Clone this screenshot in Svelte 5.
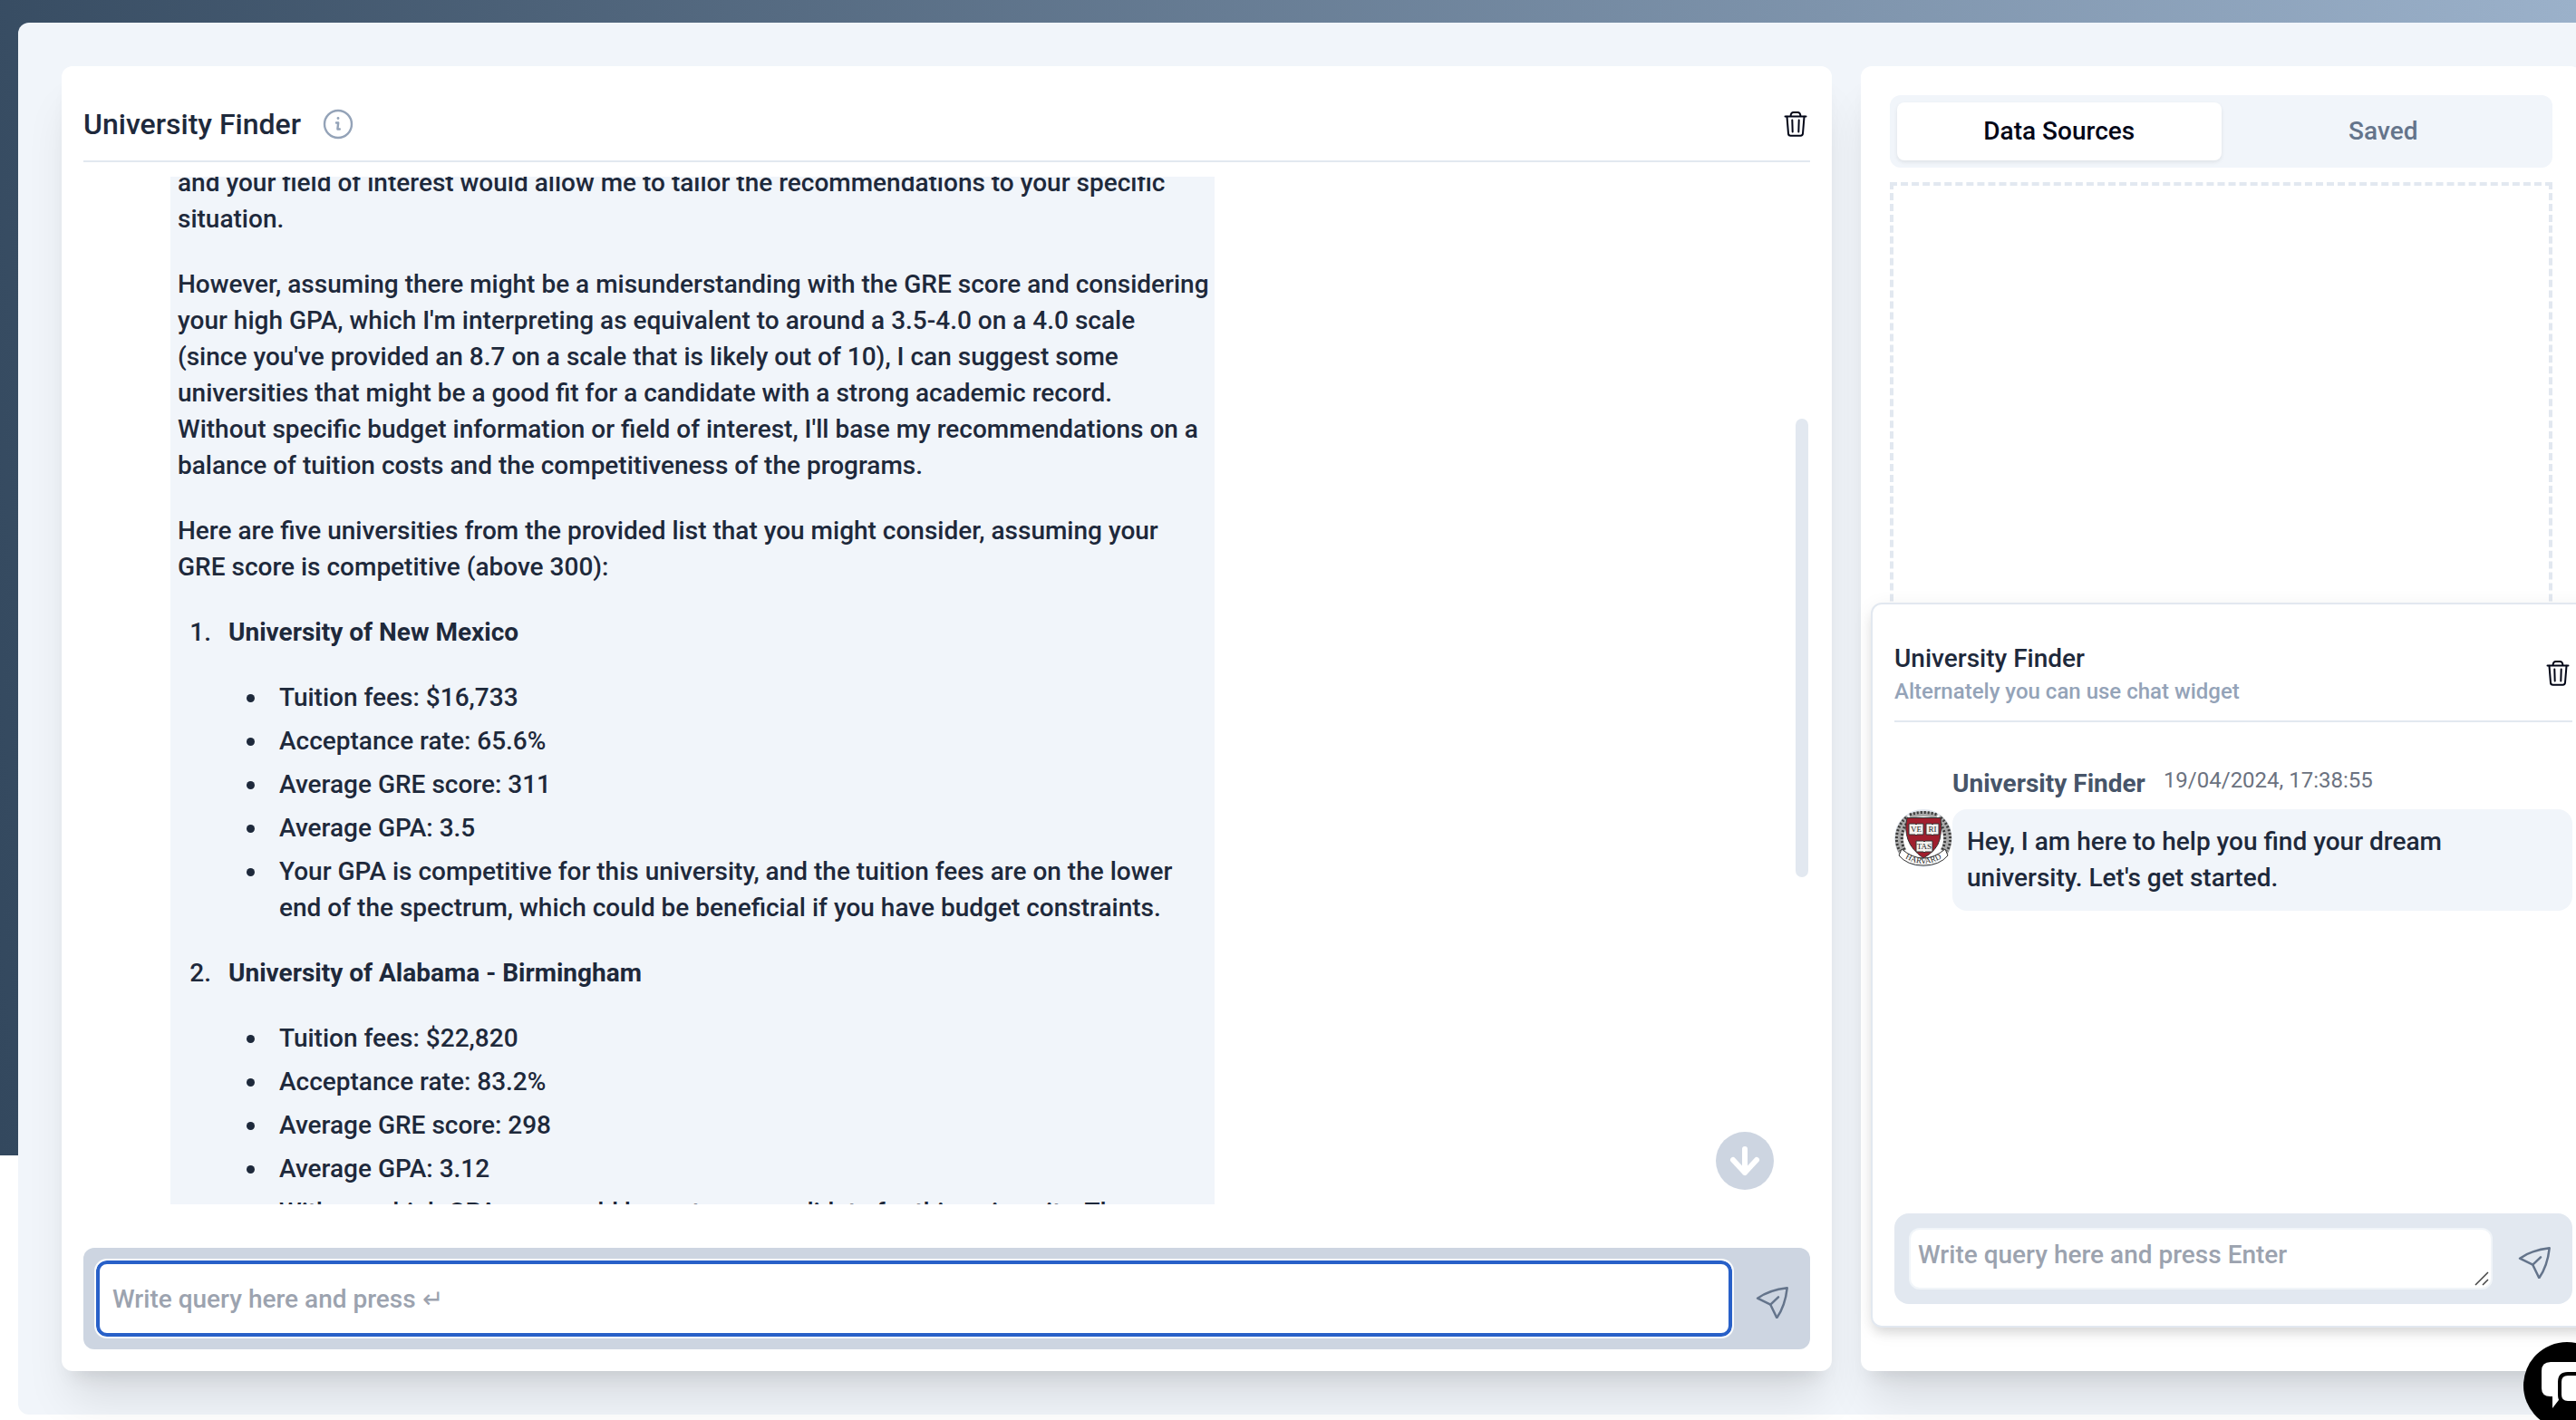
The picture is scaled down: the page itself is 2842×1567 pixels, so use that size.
<script lang="ts">
	type University = {
		name: string;
		facts: string[];
	};

	const intro = [
		'and your field of interest would allow me to tailor the recommendations to your specific situation.',
		"However, assuming there might be a misunderstanding with the GRE score and considering your high GPA, which I'm interpreting as equivalent to around a 3.5-4.0 on a 4.0 scale (since you've provided an 8.7 on a scale that is likely out of 10), I can suggest some universities that might be a good fit for a candidate with a strong academic record.\nWithout specific budget information or field of interest, I'll base my recommendations on a balance of tuition costs and the competitiveness of the programs.",
		'Here are five universities from the provided list that you might consider, assuming your GRE score is competitive (above 300):'
	];

	const universities: University[] = [
		{
			name: 'University of New Mexico',
			facts: [
				'Tuition fees: $16,733',
				'Acceptance rate: 65.6%',
				'Average GRE score: 311',
				'Average GPA: 3.5',
				'Your GPA is competitive for this university, and the tuition fees are on the lower end of the spectrum, which could be beneficial if you have budget constraints.'
			]
		},
		{
			name: 'University of Alabama - Birmingham',
			facts: [
				'Tuition fees: $22,820',
				'Acceptance rate: 83.2%',
				'Average GRE score: 298',
				'Average GPA: 3.12',
				'With your high GPA, you could be a strong candidate for this university. The'
			]
		}
	];

	const tabs = ['Data Sources', 'Saved'];
	let activeTab = $state('Data Sources');
	let query = $state('');
	let widgetQuery = $state('');
</script>

{#snippet trashIcon()}
	<svg class="trash" viewBox="0 0 32 32" aria-hidden="true">
		<path d="M4.5 7.5h23M10.5 7.2c.2-2.7 1.3-4.2 3.3-4.2h4.4c2 0 3.1 1.5 3.3 4.2" />
		<path d="M6.5 7.8 8 26.3c.1 1.6 1 2.4 2.5 2.4h11c1.5 0 2.4-.8 2.5-2.4l1.5-18.5" />
		<path d="m12.3 11.5.4 13M19.7 11.5l-.4 13" />
	</svg>
{/snippet}

{#snippet sendIcon()}
	<svg class="plane" viewBox="0 0 36 44" aria-hidden="true">
		<path d="M2 21.7Q15 12.5 34.7 10.3 32.5 30 23.3 43.3L16.3 28.7Z" />
		<path d="M16.3 28.7 25 20.3" />
	</svg>
{/snippet}

<div class="page">
	<div class="backdrop"></div>

	<div class="shell">
		<main class="card chat">
			<header class="chat-header">
				<h1>University Finder</h1>
				<button class="icon-btn" aria-label="About this assistant">
					<svg class="info" viewBox="0 0 34 34" aria-hidden="true">
						<circle cx="17" cy="17" r="15" />
						<path d="M15 15.5h2.2l-.8 7h2.4" />
						<circle class="dot" cx="17" cy="10.5" r="1.4" />
					</svg>
				</button>
				<button class="icon-btn push" aria-label="Clear conversation">{@render trashIcon()}</button>
			</header>

			<div class="messages">
				<article class="answer">
					{#each intro as text}
						<p>{text}</p>
					{/each}
					<ol>
						{#each universities as university (university.name)}
							<li>
								<strong>{university.name}</strong>
								<ul>
									{#each university.facts as fact}
										<li>{fact}</li>
									{/each}
								</ul>
							</li>
						{/each}
					</ol>
				</article>
				<div class="scroll-thumb"></div>
				<button class="scroll-down" aria-label="Scroll to latest message">
					<svg viewBox="0 0 64 64" aria-hidden="true">
						<path d="M32 19v26M19 31l13 14 13-14" />
					</svg>
				</button>
			</div>

			<form class="composer" onsubmit={(e) => e.preventDefault()}>
				<input type="text" aria-label="Your query" placeholder="Write query here and press ↵" bind:value={query} />
				<button class="icon-btn" aria-label="Send">{@render sendIcon()}</button>
			</form>
		</main>

		<aside class="card sources">
			<div class="tabs" role="tablist">
				{#each tabs as tab}
					<button
						role="tab"
						class="tab"
						class:active={activeTab === tab}
						aria-selected={activeTab === tab}
						onclick={() => (activeTab = tab)}>{tab}</button
					>
				{/each}
			</div>
			<div class="drop-area"></div>

			<section class="widget">
				<header class="widget-header">
					<div>
						<h2>University Finder</h2>
						<p>Alternately you can use chat widget</p>
					</div>
					<button class="icon-btn push" aria-label="Clear widget chat">{@render trashIcon()}</button>
				</header>

				<div class="widget-message">
					<div class="byline">
						<strong>University Finder</strong>
						<time datetime="2024-04-19T17:38:55">19/04/2024, 17:38:55</time>
					</div>
					<svg class="avatar" viewBox="0 0 64 64" aria-hidden="true">
						<circle cx="32" cy="32" r="31" fill="#fff" stroke="#e2e8f0" stroke-width="2" />
						<!-- laurel wreath -->
						<g stroke="#aaa" stroke-width="9">
							<path d="M16 10C4 20 3 36 9 47" />
							<path d="M48 10c12 10 13 26 7 37" />
							<path d="M17 8q15-6 30 0" stroke-width="6" />
						</g>
						<g stroke="#3a3a3a" stroke-width="3" stroke-dasharray="2 2">
							<path d="M13 9C1 20 0 36 6 46" />
							<path d="M51 9c12 11 13 27 7 37" />
							<path d="M16 13C7 22 6 36 12 46" />
							<path d="M48 13c9 9 10 23 4 33" />
							<path d="M17 6q15-5 30 0" />
						</g>
						<path d="M8 44q24 20 48 0l3 7q-9 11-27 11T5 51Z" fill="#fff" stroke="#333" />
						<path d="M14 9.5h37q2 12-1 24T32 54Q19 45 15 33.5t-1-24Z" fill="#a01f2d" stroke="#333" />
						<g fill="#f5f3ef" stroke="#333">
							<path d="M16 16h7l1 1 1-1h7v12h-7l-1 1-1-1h-7Z" />
							<path d="M35 16h6l1 1 1-1h6v12h-6l-1 1-1-1h-6Z" />
							<path d="M24 35h8l1 1 1-1h8v12h-8l-1 1-1-1h-8Z" />
						</g>
						<text class="motto" x="24" y="25">VE</text>
						<text class="motto" x="42" y="25">RI</text>
						<text class="motto" x="33" y="44">TAS</text>
						<path id="ribbon" d="M6 50q26 20 52 0" />
						<text class="motto"><textPath href="#ribbon" startOffset="50%">HARVARD</textPath></text>
					</svg>
					<p class="bubble">Hey, I am here to help you find your dream university. Let's get started.</p>
				</div>

				<form class="widget-composer" onsubmit={(e) => e.preventDefault()}>
					<div class="field">
						<textarea rows="1" aria-label="Widget query" placeholder="Write query here and press Enter" bind:value={widgetQuery}></textarea>
						<svg class="grip" viewBox="0 0 16 16" aria-hidden="true">
							<path d="M1 15 15 1M9 15l6-6" />
						</svg>
					</div>
					<button class="icon-btn" aria-label="Send from widget">{@render sendIcon()}</button>
				</form>
			</section>
		</aside>
	</div>

	<button class="launcher" aria-label="Open support chat">
		<svg viewBox="0 0 96 96" aria-hidden="true">
			<path d="M30 22h38q10 0 10 10v18q0 10-10 10H42L32 73V60h-2q-10 0-10-9V32q0-10 10-10Z" fill="#fff" />
			<path d="M49 35h30q9 0 9 9v14q0 9-9 9v9l-10-9H49q-9 0-9-9V44q0-9 9-9Z" fill="#fff" stroke="#000" stroke-width="4" />
		</svg>
	</button>
</div>

<style>
	:global(body) {
		margin: 0;
		background: #fff;
	}

	.page {
		position: relative;
		box-sizing: border-box;
		height: 100vh;
		padding: 25px 0 6px 20px;
		overflow: hidden;
		font-family: Roboto, 'Liberation Sans', sans-serif;
		font-size: 28px;
		font-weight: 500;
		line-height: 40px;
		color: #1e293b;
	}

	.page * {
		box-sizing: border-box;
	}

	.backdrop {
		position: absolute;
		inset: 0 0 292px;
		background: linear-gradient(84deg, #33485e, #9bb1ca);
	}

	.shell {
		position: relative;
		display: grid;
		grid-template-columns: minmax(0, 1fr) 795px;
		gap: 32px;
		height: 100%;
		margin-right: -54px;
		padding: 48px;
		border-radius: 12px;
		background: #f1f5fa;
	}

	.card {
		display: flex;
		flex-direction: column;
		min-height: 0;
		border-radius: 12px;
		background: #fff;
		box-shadow:
			0 40px 50px -10px rgba(0, 0, 0, 0.1),
			0 16px 20px -12px rgba(0, 0, 0, 0.1);
	}

	h1,
	h2,
	p {
		margin: 0;
		font-weight: 500;
	}

	button,
	input,
	textarea {
		font: inherit;
	}

	button {
		padding: 0;
		border: none;
		background: none;
		cursor: pointer;
	}

	.icon-btn {
		display: flex;
		flex: none;
	}

	.push {
		margin-left: auto;
	}

	svg {
		display: block;
		fill: none;
	}

	.trash {
		width: 32px;
		height: 32px;
		stroke: #020617;
		stroke-width: 2;
		stroke-linecap: round;
	}

	.plane {
		width: 36px;
		height: 44px;
		stroke: #64748b;
		stroke-width: 2.5;
		stroke-linejoin: round;
		stroke-linecap: round;
	}

	.info {
		width: 34px;
		height: 34px;
		stroke: #94a3b8;
		stroke-width: 2.4;
		stroke-linejoin: round;
		stroke-linecap: round;
	}

	.info .dot {
		fill: #94a3b8;
		stroke: none;
	}

	/* main chat */
	.chat {
		padding: 24px;
	}

	.chat-header {
		display: flex;
		align-items: center;
		gap: 24px;
		padding: 20px 0;
		border-bottom: 2px solid #e2e8f0;
	}

	h1 {
		font-size: 32px;
	}

	.messages {
		position: relative;
		flex: 1;
		min-height: 0;
		margin: 16px 0 48px;
		padding-left: 96px;
		overflow: hidden;
	}

	.answer {
		width: 1152px;
		margin-top: -13px;
		padding: 0 6px 0 8px;
		background: #f1f5fa;
	}

	.answer p {
		margin-bottom: 32px;
		white-space: pre-line;
	}

	.answer ol,
	.answer ul {
		margin: 0;
		padding-left: 44px;
	}

	.answer li {
		padding-left: 12px;
	}

	.answer ol > li {
		margin-bottom: 32px;
	}

	.answer ul {
		margin-top: 32px;
		list-style: disc;
	}

	.answer ul li {
		margin-bottom: 8px;
	}

	.answer strong {
		font-weight: 700;
	}

	.scroll-thumb {
		position: absolute;
		top: 267px;
		right: 2px;
		width: 14px;
		height: 506px;
		border-radius: 7px;
		background: #e2e8f0;
	}

	.scroll-down {
		position: absolute;
		right: 40px;
		bottom: 16px;
		width: 64px;
		height: 64px;
		border-radius: 50%;
		background: #cdd5e1;
	}

	.scroll-down svg {
		stroke: #fff;
		stroke-width: 6;
		stroke-linecap: round;
		stroke-linejoin: round;
	}

	.composer {
		display: flex;
		align-items: center;
		gap: 24px;
		padding: 12px 24px 12px 12px;
		border-radius: 12px;
		background: #cdd5e1;
	}

	.composer input {
		flex: 1;
		min-width: 0;
		height: 88px;
		padding: 0 18px;
		border: 2px solid #f8fafc;
		border-radius: 14px;
		outline: none;
		background: #fff;
		box-shadow: inset 0 0 0 4px #2860c8;
		color: inherit;
	}

	input::placeholder,
	textarea::placeholder {
		color: #9ca3af;
		opacity: 1;
	}

	/* data sources panel */
	.sources {
		position: relative;
		padding: 32px;
	}

	.tabs {
		display: grid;
		grid-template-columns: 1fr 1fr;
		padding: 8px;
		border-radius: 12px;
		background: #f1f5fa;
	}

	.tab {
		height: 64px;
		border-radius: 8px;
		color: #64748b;
	}

	.tab.active {
		background: #fff;
		box-shadow: 0 2px 4px rgba(0, 0, 0, 0.08);
		color: #020617;
	}

	.drop-area {
		flex: 1;
		margin: 16px 0 64px;
		border: 4px dashed #e2e8f0;
	}

	.widget {
		position: absolute;
		left: 11px;
		right: -16px;
		bottom: 48px;
		display: flex;
		flex-direction: column;
		height: 800px;
		padding: 24px;
		border: 2px solid #e2e8f0;
		border-radius: 12px;
		background: #fff;
		box-shadow:
			0 8px 12px -2px rgba(0, 0, 0, 0.1),
			0 4px 24px -4px rgba(0, 0, 0, 0.1);
	}

	.widget-header {
		display: flex;
		align-items: center;
		padding: 16px 0;
		border-bottom: 2px solid #e2e8f0;
	}

	h2 {
		font-size: 28px;
	}

	.widget-header p {
		color: #94a3b8;
		font-size: 24px;
		line-height: 32px;
	}

	.widget-message {
		display: grid;
		grid-template-columns: 64px 1fr;
		row-gap: 8px;
		margin: 48px 0 auto;
	}

	.byline {
		grid-column: 2;
		display: flex;
		align-items: flex-start;
		gap: 20px;
	}

	.byline strong {
		color: #475569;
		font-weight: 700;
	}

	.byline time {
		color: #6b7280;
		font-size: 24px;
		font-weight: 400;
		line-height: 32px;
	}

	.avatar {
		width: 64px;
		height: 64px;
	}

	.motto {
		fill: #222;
		font-family: 'Liberation Serif', serif;
		font-size: 9px;
		text-anchor: middle;
	}

	.bubble {
		padding: 16px;
		border-radius: 16px;
		background: #f1f5fa;
	}

	.widget-composer {
		display: flex;
		align-items: center;
		gap: 28px;
		padding: 16px 24px 16px 16px;
		border-radius: 16px;
		background: #e2e8f0;
	}

	.field {
		position: relative;
		flex: 1;
	}

	textarea {
		display: block;
		width: 100%;
		height: 68px;
		padding: 8px;
		border: 2px solid #f1f5f9;
		border-radius: 12px;
		outline: none;
		resize: none;
		background: #fff;
		color: inherit;
	}

	.grip {
		position: absolute;
		right: 4px;
		bottom: 4px;
		width: 16px;
		height: 16px;
		stroke: #444;
		stroke-width: 1.5;
	}

	.launcher {
		position: absolute;
		right: -38px;
		bottom: -10px;
		width: 96px;
		height: 96px;
		border-radius: 50%;
		background: #000;
	}
</style>
